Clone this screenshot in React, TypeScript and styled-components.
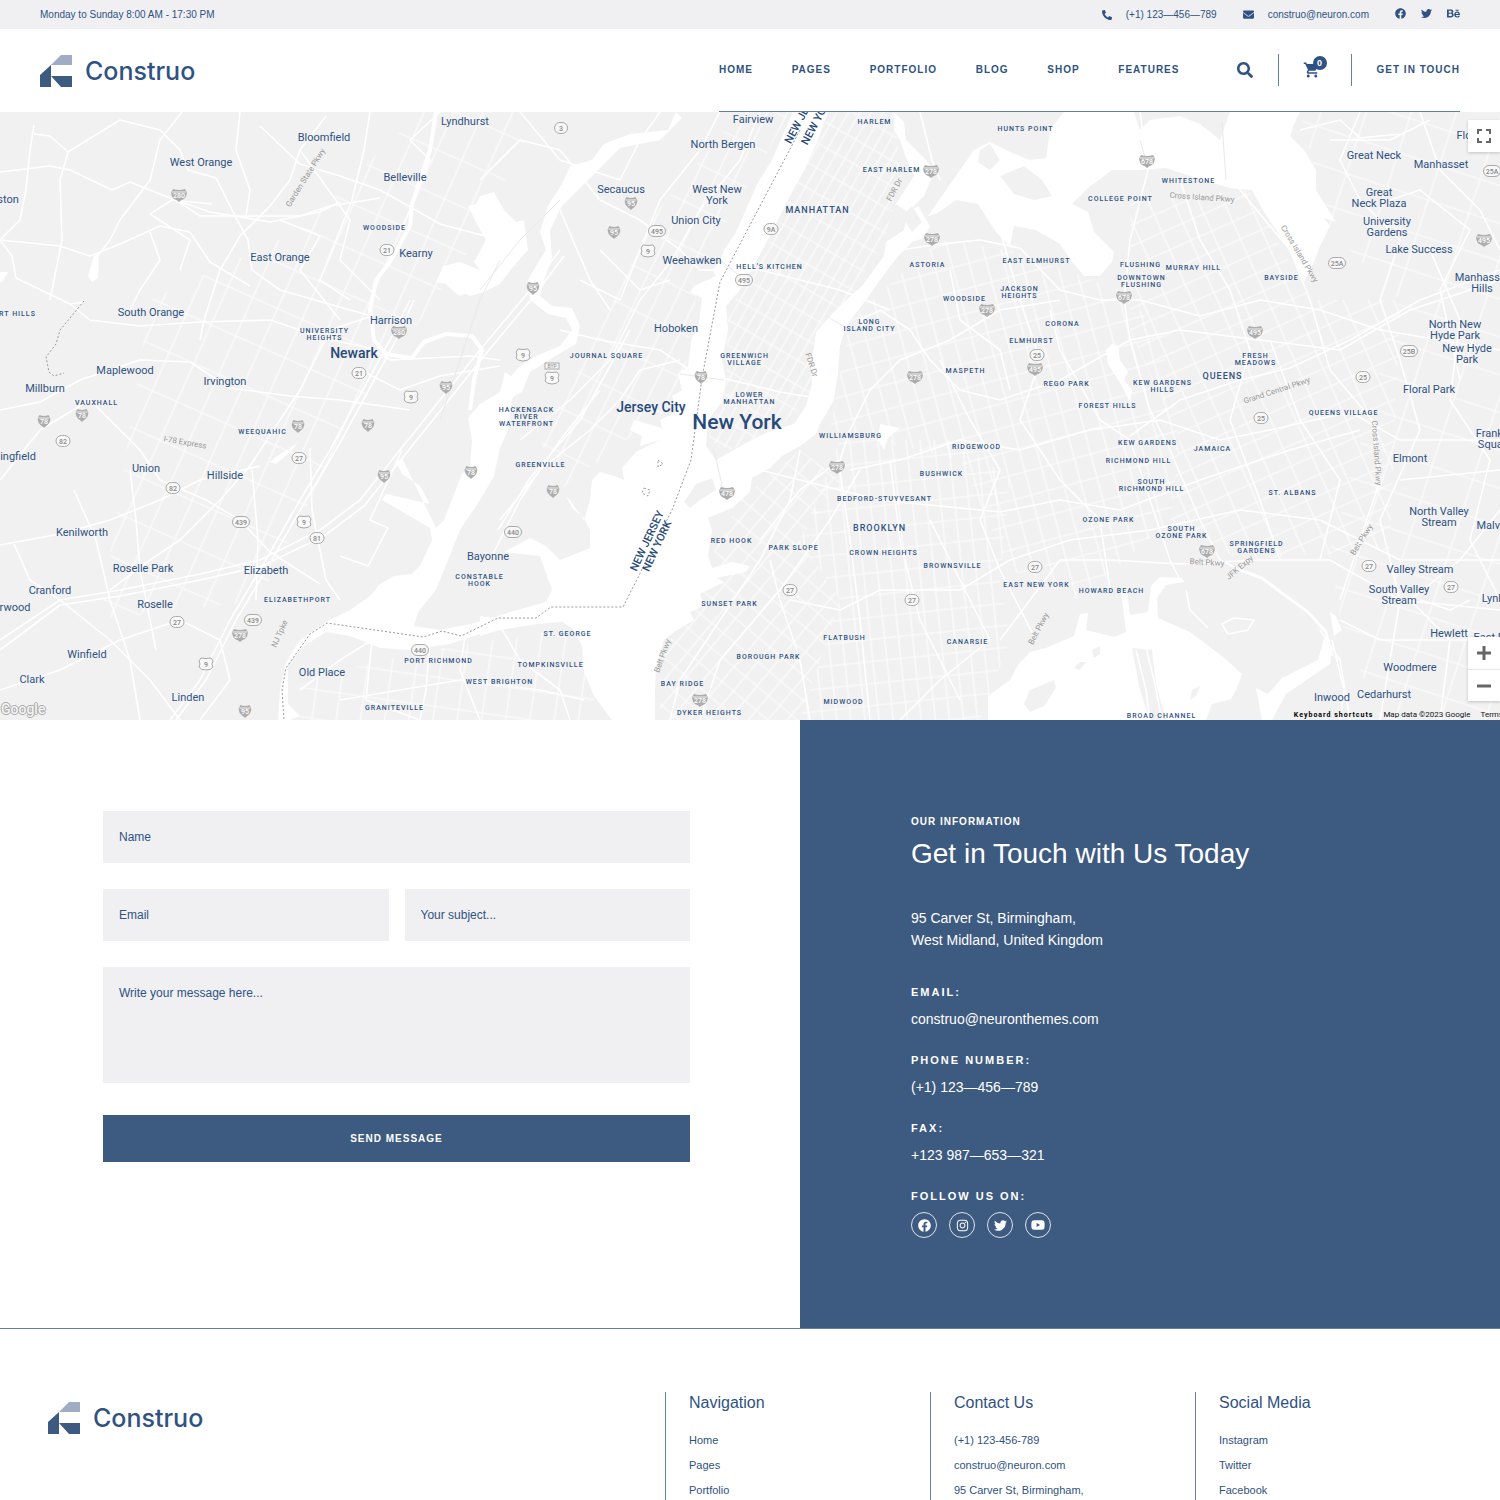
import React from "react";
import styled, { createGlobalStyle, css } from "styled-components";
import {
  FaPhoneAlt,
  FaEnvelope,
  FaFacebook,
  FaTwitter,
  FaBehance,
  FaSearch,
  FaInstagram,
  FaYoutube,
} from "react-icons/fa";
import { MdShoppingCart } from "react-icons/md";

const navy = "#2f5282";
const blue = "#3d5a80";
const line = "#6480a6";
const haze = "#f0f0f2";
const sans = `"Liberation Sans", Arial, sans-serif`;
const mapFont = `Roboto, "Liberation Sans", sans-serif`;

const GlobalStyle = createGlobalStyle`
  *, *::before, *::after { box-sizing: border-box; }
  body { margin: 0; background: #fff; color: ${navy}; font-family: ${sans}; }
  a { color: inherit; text-decoration: none; }
  h2, h3, p, ul, dl, dd, address { margin: 0; padding: 0; }
  ul { list-style: none; }
  button, input, textarea { font-family: inherit; border: 0; border-radius: 0; }
  svg { display: block; }
`;

/* ---------- top bar and header ---------- */

const TopBar = styled.div`
  display: flex;
  align-items: center;
  justify-content: space-between;
  height: 29px;
  padding: 0 40px;
  background: ${haze};
  font-size: 10px;
  line-height: 12px;
`;

const TopContacts = styled.div`
  display: flex;
  align-items: center;
  gap: 26px;
`;

const TopLink = styled.a`
  display: flex;
  align-items: center;
  gap: 14px;
`;

const TopSocial = styled.nav`
  display: flex;
  align-items: center;
  gap: 15px;
  padding-bottom: 3px;
`;

const HeaderBar = styled.header`
  display: flex;
  justify-content: space-between;
  height: 83px;
  padding: 0 40px;
`;

const Brand = styled.a`
  display: inline-flex;
  align-items: center;
  gap: 13px;
  font-family: Inter, ${sans};
  font-size: 25px;
  font-weight: 500;
  line-height: 32px;
`;

const HeaderMain = styled.div`
  display: flex;
  align-items: center;
  width: 50%;
  min-width: 741px;
  border-bottom: 1px solid ${line};
  font-size: 10px;
  font-weight: 700;
  line-height: 12px;
  letter-spacing: 1px;
`;

const MainNav = styled.nav`
  display: flex;
  flex: 1;
  justify-content: space-between;
`;

const IconButton = styled.button`
  display: flex;
  padding: 0;
  background: none;
  color: ${navy};
  cursor: pointer;
`;

const SearchButton = styled(IconButton)`
  margin: 0 25px 0 57px;
`;

const CartButton = styled(IconButton)`
  position: relative;
  margin: 0 28px 0 24px;
  padding-right: 2px;
`;

const CartCount = styled.span`
  position: absolute;
  top: -5px;
  right: -4px;
  width: 14px;
  height: 14px;
  border-radius: 50%;
  background: ${navy};
  color: #fff;
  font-size: 9px;
  font-weight: 700;
  line-height: 14px;
  letter-spacing: 0;
  text-align: center;
`;

const Divider = styled.span`
  width: 1px;
  height: 32px;
  background: ${line};
`;

const TouchLink = styled.a`
  margin-left: 25px;
`;

/* ---------- map ---------- */

const MapFrame = styled.section`
  position: relative;
  height: 608px;
  overflow: hidden;
  background: #f1f1f1;
  font-family: ${mapFont};
`;

const MapDrawing = styled.svg`
  width: 1500px;
  height: 608px;
`;

type Kind = "town" | "area" | "borough" | "city" | "metro" | "state" | "road";

const kinds = {
  town: css`font-size: 11px; line-height: 11px;`,
  area: css`padding: 1px 0 0 1px; font-size: 7px; line-height: 7px; font-weight: 500; letter-spacing: 1px;`,
  borough: css`padding: 1px 0 0 1px; font-size: 9px; line-height: 10px; font-weight: 500; letter-spacing: 1px;`,
  city: css`font-size: 14px; line-height: 16px; font-weight: 500; color: #274a7c;`,
  metro: css`font-size: 21px; line-height: 24px; font-weight: 500; color: #274a7c;`,
  state: css`font-size: 11px; line-height: 13px; font-weight: 500; color: #274a7c;`,
  road: css`font-size: 8px; line-height: 8px; color: #999;`,
};

const MapLabel = styled.span.attrs<{ $x: number; $y: number; $turn?: number }>((p) => ({
  style: {
    left: p.$x,
    top: p.$y,
    transform: `translate(-50%, -50%) rotate(${p.$turn || 0}deg)`,
  },
}))<{ $x: number; $y: number; $turn?: number; $kind: Kind }>`
  position: absolute;
  text-align: center;
  white-space: pre;
  ${(p) => kinds[p.$kind]}
`;

const MapControl = styled.button`
  display: flex;
  align-items: center;
  justify-content: center;
  width: 32px;
  height: 32px;
  padding: 0;
  background: #fff;
  cursor: pointer;
`;

const FullscreenCorner = styled.div`
  position: absolute;
  top: 8px;
  right: 0;
  box-shadow: 0 1px 3px rgba(0, 0, 0, 0.2);
`;

const ZoomCorner = styled.div`
  position: absolute;
  right: 0;
  bottom: 19px;
  background: #fff;
  box-shadow: 0 1px 3px rgba(0, 0, 0, 0.2);
  & > button + button { border-top: 1px solid #e6e6e6; }
`;

const Credits = styled.div`
  position: absolute;
  right: -3px;
  bottom: 0;
  display: flex;
  gap: 10px;
  color: #111;
  font-size: 8px;
  line-height: 10px;
  white-space: nowrap;
`;

const Shortcuts = styled.button`
  padding: 0;
  background: none;
  color: #000;
  font-size: 7px;
  font-weight: 700;
  line-height: 10px;
  letter-spacing: 1px;
`;

const GoogleMark = styled.a`
  position: absolute;
  left: 1px;
  bottom: 2px;
  color: #f4f4f4;
  font-size: 14px;
  font-weight: 500;
  line-height: 18px;
  text-shadow: 1px 0 #aaa, -1px 0 #aaa, 0 1px #aaa, 0 -1px #aaa;
`;

const labels: [Kind, string, number, number, number?][] = [
  ["town", "Lyndhurst", 465, 121], ["town", "Bloomfield", 324, 137], ["town", "West Orange", 201, 162],
  ["town", "Belleville", 405, 177], ["town", "ston", 8, 199], ["town", "East Orange", 280, 257],
  ["town", "Kearny", 416, 253], ["town", "South Orange", 151, 312], ["town", "Harrison", 391, 320],
  ["town", "Maplewood", 125, 370], ["town", "Irvington", 225, 381], ["town", "Millburn", 45, 388],
  ["town", "ingfield", 18, 456], ["town", "Union", 146, 468], ["town", "Hillside", 225, 475],
  ["town", "Kenilworth", 82, 532], ["town", "Roselle Park", 143, 568], ["town", "Elizabeth", 266, 570],
  ["town", "Cranford", 50, 590], ["town", "rwood", 15, 607], ["town", "Roselle", 155, 604],
  ["town", "Winfield", 87, 654], ["town", "Clark", 32, 679], ["town", "Linden", 188, 697],
  ["town", "Old Place", 322, 672], ["town", "Bayonne", 488, 556], ["town", "Fairview", 753, 119],
  ["town", "North Bergen", 723, 144], ["town", "Secaucus", 621, 189], ["town", "West New\nYork", 717, 195],
  ["town", "Union City", 696, 220], ["town", "Weehawken", 692, 260], ["town", "Hoboken", 676, 328],
  ["town", "Flo", 1464, 135], ["town", "Great Neck", 1374, 155], ["town", "Manhasset", 1441, 164],
  ["town", "Great\nNeck Plaza", 1379, 198], ["town", "University\nGardens", 1387, 227],
  ["town", "Lake Success", 1419, 249], ["town", "Manhasset\nHills", 1482, 283],
  ["town", "North New\nHyde Park", 1455, 330], ["town", "New Hyde\nPark", 1467, 354],
  ["town", "Floral Park", 1429, 389], ["town", "Elmont", 1410, 458], ["town", "Franklin\nSquare", 1495, 439],
  ["town", "North Valley\nStream", 1439, 517], ["town", "Malverne", 1499, 525],
  ["town", "Valley Stream", 1420, 569], ["town", "South Valley\nStream", 1399, 595],
  ["town", "Lynbrook", 1504, 598], ["town", "Hewlett", 1449, 633], ["town", "East Roc", 1495, 637],
  ["town", "Woodmere", 1410, 667], ["town", "Cedarhurst", 1384, 694], ["town", "Inwood", 1332, 697],
  ["area", "WOODSIDE", 384, 228], ["area", "RT HILLS", 17, 314], ["area", "UNIVERSITY\nHEIGHTS", 324, 334],
  ["area", "VAUXHALL", 96, 403], ["area", "WEEQUAHIC", 262, 432], ["area", "ELIZABETHPORT", 297, 600],
  ["area", "GRANITEVILLE", 394, 708], ["area", "PORT RICHMOND", 438, 661], ["area", "WEST BRIGHTON", 499, 682],
  ["area", "TOMPKINSVILLE", 550, 665], ["area", "ST. GEORGE", 567, 634], ["area", "CONSTABLE\nHOOK", 479, 580],
  ["area", "GREENVILLE", 540, 465], ["area", "HACKENSACK\nRIVER\nWATERFRONT", 526, 417],
  ["area", "JOURNAL SQUARE", 606, 356], ["area", "HARLEM", 874, 122], ["area", "EAST HARLEM", 891, 170],
  ["area", "HELL'S KITCHEN", 769, 267], ["area", "GREENWICH\nVILLAGE", 744, 359],
  ["area", "LOWER\nMANHATTAN", 749, 398], ["area", "ASTORIA", 927, 265], ["area", "WOODSIDE", 964, 299],
  ["area", "LONG\nISLAND CITY", 869, 325], ["area", "MASPETH", 965, 371], ["area", "WILLIAMSBURG", 850, 436],
  ["area", "RIDGEWOOD", 976, 447], ["area", "BUSHWICK", 941, 474], ["area", "BEDFORD-STUYVESANT", 884, 499],
  ["area", "CROWN HEIGHTS", 883, 553], ["area", "PARK SLOPE", 793, 548], ["area", "RED HOOK", 731, 541],
  ["area", "BROWNSVILLE", 952, 566], ["area", "SUNSET PARK", 729, 604], ["area", "FLATBUSH", 844, 638],
  ["area", "CANARSIE", 967, 642], ["area", "BOROUGH PARK", 768, 657], ["area", "BAY RIDGE", 682, 684],
  ["area", "DYKER HEIGHTS", 709, 713], ["area", "MIDWOOD", 843, 702], ["area", "HUNTS POINT", 1025, 129],
  ["area", "WHITESTONE", 1188, 181], ["area", "COLLEGE POINT", 1120, 199], ["area", "EAST ELMHURST", 1036, 261],
  ["area", "JACKSON\nHEIGHTS", 1019, 292], ["area", "FLUSHING", 1140, 265], ["area", "DOWNTOWN\nFLUSHING", 1141, 281],
  ["area", "MURRAY HILL", 1193, 268], ["area", "BAYSIDE", 1281, 278], ["area", "CORONA", 1062, 324],
  ["area", "ELMHURST", 1031, 341], ["area", "REGO PARK", 1066, 384], ["area", "KEW GARDENS\nHILLS", 1162, 386],
  ["area", "FRESH\nMEADOWS", 1255, 359], ["area", "FOREST HILLS", 1107, 406], ["area", "QUEENS VILLAGE", 1343, 413],
  ["area", "KEW GARDENS", 1147, 443], ["area", "RICHMOND HILL", 1138, 461], ["area", "JAMAICA", 1212, 449],
  ["area", "SOUTH\nRICHMOND HILL", 1151, 485], ["area", "ST. ALBANS", 1292, 493], ["area", "OZONE PARK", 1108, 520],
  ["area", "SOUTH\nOZONE PARK", 1181, 532], ["area", "SPRINGFIELD\nGARDENS", 1256, 547],
  ["area", "EAST NEW YORK", 1036, 585], ["area", "HOWARD BEACH", 1111, 591], ["area", "BROAD CHANNEL", 1161, 716],
  ["borough", "MANHATTAN", 817, 209], ["borough", "BROOKLYN", 879, 527], ["borough", "QUEENS", 1222, 375],
  ["city", "Newark", 354, 353], ["city", "Jersey City", 651, 407], ["metro", "New York", 737, 422],
  ["state", "NEW JERSEY", 647, 541, -65], ["state", "NEW YORK", 657, 546, -65],
  ["state", "NEW JERSEY", 803, 114, -62], ["state", "NEW YORK", 817, 120, -62],
  ["road", "Garden State Pkwy", 306, 178, -58], ["road", "I-78 Express", 185, 443, 10],
  ["road", "NJ Tpke", 280, 634, -66], ["road", "FDR Dr", 895, 190, -62], ["road", "FDR Dr", 811, 365, 72],
  ["road", "Belt Pkwy", 663, 656, -70], ["road", "Belt Pkwy", 1039, 629, -62], ["road", "Belt Pkwy", 1207, 563, 3],
  ["road", "Belt Pkwy", 1362, 540, -58], ["road", "JFK Expy", 1240, 568, -40],
  ["road", "Cross Island Pkwy", 1202, 198, 4], ["road", "Cross Island Pkwy", 1299, 254, 59],
  ["road", "Cross Island Pkwy", 1376, 453, 86], ["road", "Grand Central Pkwy", 1277, 391, -18],
];

type Shield = "i" | "r" | "u";
const shields: [Shield, string, number, number][] = [
  ["i", "280", 179, 195], ["i", "280", 399, 332], ["i", "95", 446, 387], ["i", "78", 44, 421], ["i", "78", 82, 415],
  ["i", "78", 298, 426], ["i", "78", 368, 425], ["i", "95", 384, 476], ["i", "78", 471, 472], ["i", "278", 240, 635],
  ["i", "95", 245, 711], ["i", "95", 631, 203], ["i", "95", 614, 232], ["i", "95", 533, 288], ["i", "78", 701, 377],
  ["i", "78", 553, 491], ["i", "478", 727, 493], ["i", "278", 931, 171], ["i", "278", 932, 239], ["i", "278", 915, 377],
  ["i", "278", 837, 467], ["i", "278", 700, 700], ["i", "278", 987, 310], ["i", "495", 1035, 369], ["i", "678", 1124, 297],
  ["i", "678", 1147, 161], ["i", "495", 1255, 332], ["i", "678", 1207, 551], ["i", "495", 1484, 240],
  ["r", "3", 561, 128], ["r", "21", 387, 250], ["r", "21", 359, 373], ["r", "82", 63, 441], ["r", "82", 173, 488],
  ["r", "27", 299, 458], ["r", "439", 241, 522], ["r", "81", 317, 538], ["r", "27", 177, 622], ["r", "439", 253, 620],
  ["r", "440", 420, 650], ["r", "440", 513, 532], ["r", "495", 657, 231], ["r", "9A", 771, 229], ["r", "495", 744, 280],
  ["r", "27", 790, 590], ["r", "27", 912, 600], ["r", "25", 1037, 355], ["r", "25A", 1337, 263], ["r", "25A", 1492, 171],
  ["r", "25B", 1409, 351], ["r", "25", 1363, 377], ["r", "25", 1261, 418], ["r", "27", 1035, 567], ["r", "27", 1369, 566],
  ["r", "27", 1451, 587],
  ["u", "9", 411, 397], ["u", "9", 304, 522], ["u", "9", 206, 664], ["u", "9", 648, 251], ["u", "9", 523, 355], ["u", "9", 552, 378],
];

function RouteShield({ kind, text, x, y }: { kind: Shield; text: string; x: number; y: number }) {
  const w = text.length > 2 ? 16 : text.length > 1 ? 13 : kind === "u" ? 14 : 12;
  const h = w / 2;
  return (
    <g transform={`translate(${x} ${y})`}>
      {kind === "i" && (
        <>
          <path
            d={`M${-h + 2} -6 Q0 -4 ${h - 2} -6 Q${h + 2} -1 ${h - 3} 4 Q2 5 0 7 Q-2 5 ${-h + 3} 4 Q${-h - 2} -1 ${-h + 2} -6Z`}
            fill="#adadad"
          />
          <path d={`M${-h + 1} -3H${h - 1}`} stroke="#f1f1f1" strokeWidth="1" />
        </>
      )}
      {kind === "r" && <rect x={-h - 0.5} y="-5.5" width={w + 1} height="11" rx="5.5" fill="#f8f8f8" stroke="#aaa" />}
      {kind === "u" && (
        <path d="M-5 -6Q0 -5 5 -6L7 -3Q5 0 7 3Q5 6 0 6Q-5 6 -7 3Q-5 0 -7 -3Z" fill="#f8f8f8" stroke="#aaa" />
      )}
      <text y="3" textAnchor="middle" fontSize="7" fontWeight="500" fill={kind === "i" ? "#fff" : "#888"}>
        {text}
      </text>
    </g>
  );
}

const water = [
  // Hudson river and Upper Bay
  "M793 112L784 132L772 160L757 184L745 212L735 234L724 250L720 262L712 270L716 276L694 286L690 292L702 298L698 330L692 336L688 366L678 374L682 390L672 396L676 412L660 420L662 428L634 420L630 430L642 436L640 446L660 440L636 452L622 468L624 480L614 476L600 472L592 480L590 500L584 520L570 500L566 496L572 508L584 518L590 530L590 548L560 560L546 546L530 538L504 552L540 556L552 590L546 602L510 612L492 618L480 616L480 636L500 630L560 620L574 630L582 646L584 672L594 696L612 720L655 720L655 694L656 666L664 640L674 632L694 620L690 612L704 606L700 594L724 582L716 578L746 572L750 566L732 562L712 568L708 556L712 530L708 518L732 508L750 492L752 478L770 468L782 456L800 446L816 434L820 424L834 400L838 372L840 346L846 326L866 300L880 280L898 256L912 242L924 238L930 226L918 206L908 212L904 230L886 242L884 256L862 286L846 300L830 316L816 332L813 356L812 384L806 406L794 424L768 432L748 442L730 452L716 460L706 446L708 420L722 402L726 380L722 360L728 330L726 306L740 290L756 262L772 232L790 196L804 170L818 140L828 112Z",
  // Newark Bay and the Kills
  "M505 372L500 392L480 404L468 418L472 440L470 468L462 474L444 520L436 528L402 458L396 462L402 474L420 486L430 504L386 494L382 500L430 528L432 540L420 566L412 574L394 576L380 584L370 596L350 610L326 622L300 640L286 662L280 690L278 720L290 720L300 716L288 704L288 664L304 646L326 632L350 636L380 648L410 650L450 644L480 634L516 626L560 622L600 616L622 610L610 600L560 606L520 612L470 624L440 630L414 626L418 612L436 590L448 560L460 530L480 500L494 476L500 448L508 430L512 400L520 382Z",
  // Meadowlands and Hackensack river
  "M676 112L668 130L630 134L604 144L592 160L570 166L562 184L548 206L540 232L546 250L536 266L528 280L530 300L548 314L566 318L572 330L560 346L536 356L520 366L508 380L500 404L522 392L530 372L552 358L576 344L580 326L572 308L552 306L540 296L544 280L552 258L550 230L562 206L580 188L590 178L604 164L620 148L660 140L682 118Z",
  "M480 196L494 192L504 210L516 222L524 220L528 250L512 268L500 284L484 292L470 296L462 292L480 270L474 262L486 240L478 226L468 206L476 204Z",
  "M444 266L460 262L480 270L484 284L460 296L452 290L446 284L436 282Z",
  // East river, Flushing bay and Long Island sound
  "M928 216L946 190L960 170L974 150L990 142L1010 152L1030 160L1046 158L1050 130L1064 112L1134 112L1140 130L1150 120L1180 116L1200 124L1220 140L1230 112L1300 112L1294 124L1290 136L1304 150L1316 170L1316 190L1326 206L1336 222L1324 218L1330 226L1320 246L1314 262L1304 282L1296 262L1280 236L1264 212L1252 190L1230 188L1196 178L1166 168L1138 170L1112 170L1088 188L1072 204L1088 212L1094 232L1114 252L1112 262L1100 276L1084 276L1072 262L1060 244L1036 230L1014 226L1010 246L996 232L978 204L956 200L936 214Z",
  "M894 112L904 122L906 140L926 160L934 172L924 196L908 212L896 204L914 176L906 158L900 140L894 130Z",
  // Jamaica bay
  "M988 720L988 696L1010 680L1018 665L1030 652L1046 648L1074 636L1080 614L1088 613L1086 630L1114 637L1126 632L1121 590L1127 590L1130 615L1148 612L1151 586L1160 577L1182 578L1184 582L1166 585L1157 598L1158 618L1190 632L1222 656L1242 674L1236 690L1226 708L1224 720Z",
  "M1256 688L1268 694L1282 678L1318 660L1324 638L1332 650L1330 664L1286 694L1272 720L1262 720Z",
  "M1112 344L1118 346L1120 360L1128 372L1124 380L1132 390L1130 402L1122 386L1108 364L1106 350Z",
  "M94 256L99 252L98 278L92 282L88 276Z",
  "M270 462L280 454L296 444L300 440L290 452L276 464Z",
  "M0 272L8 272L2 282L0 282Z",
  "M1330 612L1336 616L1342 630L1334 636Z",
  "M880 424L900 428L888 438L884 450L878 440Z",
];

const islands = [
  "M980 150L990 144L1000 160L990 170L978 162Z",
  "M1000 176L1024 166L1042 180L1052 196L1034 200L1014 194Z",
  "M696 484L712 478L716 490L700 500L690 508L684 502Z",
  "M1024 704L1030 690L1054 680L1056 688L1044 706L1030 712Z",
  "M1132 648L1152 650L1156 684L1166 720L1150 720L1140 690Z",
  "M1074 668L1080 662L1086 662L1080 670Z",
  "M1092 650L1100 646L1100 654L1094 658Z",
  "M902 216L912 206L922 222L912 232Z",
  "M1192 690L1200 686L1196 696L1190 700Z",
  "M1212 704L1236 698L1240 720L1206 720Z",
];

const highways = [
  "M0 172L50 166L70 170L112 190L130 182L170 198L210 212L270 222L320 212L340 202",
  "M34 125L30 150L26 190L20 220L0 240L12 256L16 278L70 304L85 302",
  "M68 152L60 180L62 240L50 300M0 240L60 246L90 256L120 244L160 226L190 232L210 262L250 286",
  "M182 112L160 140L150 180L120 220L110 240L96 258",
  "M68 152L120 120L160 130L180 150L188 170L216 178L232 210L248 240L252 270L280 290L350 310L372 316",
  "M240 112L236 150L250 190L246 216L300 216L330 206L380 198",
  "M326 116L300 150L290 180L270 206L240 236L220 270L204 320L200 340",
  "M260 126L300 164L340 176L380 190L412 208L440 224L500 240",
  "M370 112L364 150L352 200L336 240L320 280L350 300",
  "M440 112L410 140L430 160L410 210L400 232",
  "M180 270L190 240L150 214L172 200L212 204",
  "M34 134L50 136L68 152M150 232L160 260L140 290L130 310M250 216L200 216L176 200",
  "M300 150L350 220L340 260L380 300M280 220L320 236L300 270L340 320",
  "M70 304L90 320L140 326L200 322L270 320L330 340L370 348L390 360L470 356L500 360",
  "M372 316L330 330L300 390L280 420L250 466L220 500L180 540L150 560L110 590",
  "M0 410L40 402L80 380L140 360L190 362L230 388L290 396L340 400L410 410",
  "M0 480L40 430L90 400L140 450L160 480L206 500L240 520L270 552L320 584",
  "M0 545L60 534L110 520L160 500L200 480L260 466",
  "M0 640L60 600L120 590L200 574L260 560L320 530L360 500L400 450L440 400L480 350L530 290L560 250",
  "M0 650L60 605L120 596L200 580L262 566L324 536L364 506L404 456L444 406L484 356L534 296L564 256",
  "M14 544L30 580L60 600L110 640L150 680L180 720",
  "M74 490L96 540L110 600L130 660L140 720M130 470L136 520L140 570L150 620L156 650",
  "M0 690L60 670L120 640L180 620L220 640L230 680L200 720",
  "M170 720L200 680L230 620L260 570L300 500L330 450L390 340L410 300",
  "M176 720L206 680L236 620L266 570L306 500L336 450L396 340L414 300",
  "M252 470L258 540L256 600M310 448L312 510L326 580L340 600",
  "M360 370L400 390L440 376L500 366M402 450L370 520L388 528L368 566L340 556",
  "M300 690L340 660L372 640L366 700L420 720M430 640L426 690L420 720M466 630L460 670L480 720M500 626L520 660L560 690L570 720",
  "M340 700L400 690L460 680L540 690L584 700",
  "M480 180L520 140L560 150L600 200L640 220L680 250L700 270L760 270L840 290L890 310",
  "M520 112L560 160L620 180L640 140L660 112M580 280L620 300L640 250L660 200L700 150L720 112",
  "M560 210L590 280L610 310M600 250L640 290L670 280M560 330L600 340L660 350L690 370L780 392L830 400",
  "M520 440L570 400L610 360L640 300L672 260L700 210L740 160L760 112",
  "M500 520L540 470L590 430L620 400L640 370L680 360M490 560L520 500L560 440L600 390M498 530L530 478L580 420L630 330",
  "M860 320L880 310L910 330L930 360L960 390L1000 400L1060 380L1130 340L1180 330L1260 340L1340 350L1410 310L1500 280",
  "M900 250L940 244L980 240L1020 248L1060 290L1100 300L1140 300L1200 316L1260 300L1320 310L1380 330L1500 350",
  "M920 112L932 160L940 180M1050 310L1060 350L1100 420L1130 440L1150 500L1170 560L1180 580",
  "M1140 112L1148 170L1130 240L1124 300L1130 340L1150 410L1170 450L1200 520L1220 560L1240 570",
  "M1222 170L1240 190L1290 250L1310 300L1330 370L1372 420L1380 480L1360 540L1340 600",
  "M1130 436L1180 400L1240 380L1290 368L1350 340L1420 300L1500 270",
  "M850 470L900 460L960 440L1020 450L1090 430L1160 420L1220 440L1270 430L1350 412L1400 440L1500 440",
  "M760 540L800 490L840 460L850 430L870 390L900 360L950 340L1000 310L1060 300",
  "M670 720L680 680L720 620L760 560L790 500L800 450M700 720L720 660L780 590L830 520L860 470",
  "M760 470L800 480L880 500L1000 512L1060 500L1120 510L1200 480L1290 450L1360 430",
  "M790 600L840 610L880 590L960 590L1010 560L1070 540L1150 530L1240 510L1320 520L1400 560L1500 560",
  "M1000 640L1030 600L1060 560L1110 560L1180 564L1260 560L1330 560L1400 600L1500 610",
  "M810 720L800 660L780 600L770 560M870 720L860 620L850 540L840 470M960 700L920 620L900 540L890 460",
  "M900 720L940 680L990 640L960 580L930 520M1036 640L1000 570L980 520L1000 470L970 420L940 360",
  "M1360 112L1340 160L1360 200L1400 240L1380 300L1400 360L1420 430L1380 520L1400 600L1380 720",
  "M1300 130L1340 120L1360 138L1400 134M1390 200L1420 190L1470 230L1440 290L1460 380M1400 480L1500 470",
  "M1420 112L1440 170L1480 210L1500 250M1330 140L1390 140L1430 120M1430 250L1460 320L1450 400L1490 460L1470 540L1500 600",
  "M1440 720L1450 640L1410 600L1460 560L1500 510M1340 620L1380 640L1420 640L1500 640M1350 720L1340 660L1320 630",
  "M1180 180L1200 240L1230 290L1250 350L1230 420L1260 500L1280 560M1270 340L1300 420L1340 480L1320 560",
  "M1000 230L1020 300L1040 360L1020 420L1060 480L1100 520L1110 590M950 270L960 320L1000 350L1010 390",
  "M1186 590L1190 610L1208 628M1332 640L1344 690L1340 720M1420 600L1450 610L1470 600",
];

const streets: { id: string; size: [number, number]; turn: number; area: string }[] = [
  { id: "manhattan", size: [10, 22], turn: 30, area: "M830 112L894 112L900 160L896 200L884 240L850 296L816 330L810 400L780 426L730 450L708 440L726 380L728 310L760 262Z" },
  { id: "brooklyn", size: [15, 19], turn: 40, area: "M740 500L800 450L840 480L800 540L840 600L800 720L660 720L660 660Z" },
  { id: "flatbush", size: [14, 22], turn: -6, area: "M840 440L960 440L1010 480L1000 580L1010 640L980 720L800 720L840 600L800 540Z" },
  { id: "queens", size: [17, 24], turn: -15, area: "M850 320L940 240L1010 250L1120 290L1160 330L1180 440L1170 520L1080 600L1010 570L960 460L830 430Z" },
  { id: "jamaica", size: [23, 19], turn: -24, area: "M1130 200L1250 190L1310 300L1400 300L1390 550L1240 560L1170 520L1180 440L1130 330Z" },
  { id: "nassau", size: [43, 36], turn: 18, area: "M1300 112H1500V720H1380L1340 620L1330 550L1400 300L1330 230Z" },
  { id: "jersey", size: [18, 40], turn: 26, area: "M540 440L600 330L650 220L740 112L790 112L700 270L680 400L560 490Z" },
  { id: "newark", size: [27, 42], turn: 24, area: "M150 300L300 230L420 112H540L470 250L350 420L260 600L100 620Z" },
  { id: "staten", size: [24, 29], turn: 8, area: "M300 680L420 652L560 630L584 660L600 720H300Z" },
];

function CityMap() {
  return (
    <MapDrawing viewBox="0 112 1500 608" fontFamily="Roboto, sans-serif" aria-hidden="true">
      <defs>
        {streets.map((s) => (
          <pattern
            key={s.id}
            id={s.id}
            width={s.size[0]}
            height={s.size[1]}
            patternUnits="userSpaceOnUse"
            patternTransform={`rotate(${s.turn})`}
          >
            <path d={`M1 0V${s.size[1]}M0 1H${s.size[0]}`} stroke="#fff" strokeWidth="1.2" />
          </pattern>
        ))}
      </defs>
      <rect y="112" width="1500" height="608" fill="#f1f1f1" />
      {streets.map((s) => (
        <path key={s.id} d={s.area} fill={`url(#${s.id})`} opacity="0.8" />
      ))}
      <g fill="#fff">{water.map((d) => <path key={d} d={d} />)}</g>
      <g fill="#f1f1f1">{islands.map((d) => <path key={d} d={d} />)}</g>
      <g fill="none" stroke="#fff" strokeWidth="1.6" strokeLinejoin="round">
        {highways.map((d) => <path key={d} d={d} />)}
        <path d="M1136 650L1146 690L1150 720M1146 648L1154 680L1162 720" />
        <path d="M1222 624L1234 618L1254 620L1248 630L1228 634Z" />
      </g>
      <path d="M1240 570L1262 578L1286 596L1308 612L1326 632L1332 656" fill="none" stroke="#fff" strokeWidth="3" />
      <path
        d="M436 112L430 150L412 204L410 226L390 262L376 280L370 310L374 340L386 354L412 358L424 342L446 334L472 336L482 350L474 380L470 410"
        fill="none" stroke="#fff" strokeWidth="4" strokeLinejoin="round"
      />
      <g fill="none" stroke="#e9e9e9">
        <path d="M480 290L520 240L560 200M440 420L480 300L500 260M720 260L740 276M714 450L724 494M826 316L850 330M680 374L724 380M1140 140L1148 168M1222 122L1226 180" />
      </g>
      <g fill="none" stroke="#999" strokeDasharray="2 2">
        <path d="M800 130L720 282L702 378L691 460L672 510L623 607H551L536 618H498L461 636L442 631L423 637L327 623L310 634L286 668L282 690L284 720" />
        <path d="M84 301L70 318L60 330L56 344L46 357L49 372L54 376L64 373M658 460L663 464L658 467ZM644 488L650 490L648 496L642 493Z" />
      </g>
      {shields.map(([kind, text, x, y]) => (
        <RouteShield key={`${x}-${y}`} kind={kind} text={text} x={x} y={y} />
      ))}
      <rect x="545" y="363" width="14" height="6" fill="#f8f8f8" stroke="#aaa" />
      <text x="552" y="368" fontSize="5" fill="#888" textAnchor="middle">BYP</text>
    </MapDrawing>
  );
}

/* ---------- contact ---------- */

const Contact = styled.main`
  display: grid;
  grid-template-columns: 8fr 7fr;
`;

const Form = styled.form`
  display: flex;
  flex-direction: column;
  gap: 26px;
  padding: 91px 110px 90px 103px;
`;

const FieldRow = styled.div`
  display: grid;
  grid-template-columns: 1fr 1fr;
  gap: 16px;
`;

const field = css`
  display: block;
  width: 100%;
  padding: 0 16px;
  background: ${haze};
  color: ${navy};
  font-size: 12px;
  line-height: 20px;
  &::placeholder { color: ${navy}; opacity: 1; }
`;

const Field = styled.input`
  ${field}
  height: 52px;
`;

const Message = styled.textarea`
  ${field}
  height: 116px;
  padding-top: 16px;
  resize: none;
`;

const SendButton = styled.button`
  height: 47px;
  margin-top: 6px;
  background: ${blue};
  color: #fff;
  font-size: 10px;
  font-weight: 700;
  letter-spacing: 1px;
  text-transform: uppercase;
  cursor: pointer;
`;

const Info = styled.section`
  padding: 94px 40px 90px 111px;
  background: ${blue};
  color: #fff;
`;

const Eyebrow = styled.p`
  font-size: 10px;
  font-weight: 700;
  line-height: 16px;
  letter-spacing: 1px;
`;

const InfoTitle = styled.h2`
  margin-top: 7px;
  font-size: 28px;
  font-weight: 400;
  line-height: 34px;
`;

const Address = styled.address`
  margin: 36px 0 33px;
  font-size: 14px;
  font-style: normal;
  line-height: 22px;
`;

const Details = styled.dl`
  display: flex;
  flex-direction: column;
  gap: 22px;
`;

const DetailName = styled.dt`
  font-size: 11px;
  font-weight: 700;
  line-height: 16px;
  letter-spacing: 2px;
`;

const DetailValue = styled.dd`
  margin-top: 8px;
  font-size: 14px;
  line-height: 22px;
`;

const SocialRow = styled.dd`
  display: flex;
  gap: 12px;
  margin-top: 8px;
`;

const SocialCircle = styled.a`
  display: flex;
  align-items: center;
  justify-content: center;
  width: 26px;
  height: 26px;
  border: 1px solid #dfe5ec;
  border-radius: 50%;
`;

/* ---------- footer ---------- */

const FooterBar = styled.footer`
  display: grid;
  grid-template-columns: 1fr repeat(3, 265px);
  padding: 63px 40px 0;
  border-top: 1px solid ${line};
`;

const FooterBrand = styled.div`
  padding: 10px 8px;
`;

const FooterColumn = styled.section`
  padding-left: 23px;
  border-left: 1px solid ${line};
`;

const FooterTitle = styled.h3`
  font-size: 16px;
  font-weight: 400;
  line-height: 22px;
`;

const FooterLinks = styled.ul`
  display: flex;
  flex-direction: column;
  gap: 6px;
  margin-top: 17px;
  font-size: 11px;
  line-height: 19px;
`;

const footerColumns = [
  { title: "Navigation", links: ["Home", "Pages", "Portfolio"] },
  { title: "Contact Us", links: ["(+1) 123-456-789", "construo@neuron.com", "95 Carver St, Birmingham,"] },
  { title: "Social Media", links: ["Instagram", "Twitter", "Facebook"] },
];

function Logo() {
  return (
    <Brand href="#">
      <svg width="32" height="32" viewBox="0 0 32 32" aria-hidden="true">
        <path d="M21 0H32V10H11Z" fill="#9fadc4" />
        <path d="M0 20L11 10V32H0Z" fill={blue} />
        <path d="M11 21H32V32H21Z" fill={blue} />
      </svg>
      Construo
    </Brand>
  );
}

export default function App() {
  return (
    <>
      <GlobalStyle />
      <TopBar>
        <span>Monday to Sunday 8:00 AM - 17:30 PM</span>
        <TopContacts>
          <TopLink href="#"><FaPhoneAlt size={10} />(+1) 123—456—789</TopLink>
          <TopLink href="#"><FaEnvelope size={11} />construo@neuron.com</TopLink>
          <TopSocial aria-label="Social">
            <a href="#" aria-label="Facebook"><FaFacebook size={11} /></a>
            <a href="#" aria-label="Twitter"><FaTwitter size={11} /></a>
            <a href="#" aria-label="Behance"><FaBehance size={13} /></a>
          </TopSocial>
        </TopContacts>
      </TopBar>
      <HeaderBar>
        <Logo />
        <HeaderMain>
          <MainNav>
            {["HOME", "PAGES", "PORTFOLIO", "BLOG", "SHOP", "FEATURES"].map((item) => (
              <a key={item} href="#">{item}</a>
            ))}
          </MainNav>
          <SearchButton aria-label="Search"><FaSearch size={16} /></SearchButton>
          <Divider />
          <CartButton aria-label="Cart">
            <MdShoppingCart size={18} />
            <CartCount>0</CartCount>
          </CartButton>
          <Divider />
          <TouchLink href="#">GET IN TOUCH</TouchLink>
        </HeaderMain>
      </HeaderBar>

      <MapFrame aria-label="Map">
        <CityMap />
        {labels.map(([kind, text, x, y, turn]) => (
          <MapLabel key={`${text}-${x}`} $kind={kind} $x={x} $y={y - 112} $turn={turn}>{text}</MapLabel>
        ))}
        <FullscreenCorner>
          <MapControl aria-label="Toggle fullscreen view">
            <svg width="14" height="14" viewBox="0 0 14 14" fill="none" stroke="#666" strokeWidth="2">
              <path d="M1 5V1H5M9 1H13V5M13 9V13H9M5 13H1V9" />
            </svg>
          </MapControl>
        </FullscreenCorner>
        <ZoomCorner>
          <MapControl aria-label="Zoom in">
            <svg width="14" height="14" viewBox="0 0 14 14" stroke="#666" strokeWidth="3"><path d="M0 7H14M7 0V14" /></svg>
          </MapControl>
          <MapControl aria-label="Zoom out">
            <svg width="14" height="14" viewBox="0 0 14 14" stroke="#666" strokeWidth="3"><path d="M0 7H14" /></svg>
          </MapControl>
        </ZoomCorner>
        <GoogleMark href="#">Google</GoogleMark>
        <Credits>
          <Shortcuts>Keyboard shortcuts</Shortcuts>
          <span>Map data ©2023 Google</span>
          <a href="#">Terms</a>
        </Credits>
      </MapFrame>

      <Contact>
        <Form onSubmit={(e) => e.preventDefault()}>
          <Field type="text" aria-label="Name" placeholder="Name" />
          <FieldRow>
            <Field type="email" aria-label="Email" placeholder="Email" />
            <Field type="text" aria-label="Your subject" placeholder="Your subject..." />
          </FieldRow>
          <Message aria-label="Message" placeholder="Write your message here..." />
          <SendButton type="submit">Send message</SendButton>
        </Form>
        <Info>
          <Eyebrow>OUR INFORMATION</Eyebrow>
          <InfoTitle>Get in Touch with Us Today</InfoTitle>
          <Address>95 Carver St, Birmingham,<br />West Midland, United Kingdom</Address>
          <Details>
            <div><DetailName>EMAIL:</DetailName><DetailValue>construo@neuronthemes.com</DetailValue></div>
            <div><DetailName>PHONE NUMBER:</DetailName><DetailValue>(+1) 123—456—789</DetailValue></div>
            <div><DetailName>FAX:</DetailName><DetailValue>+123 987—653—321</DetailValue></div>
            <div>
              <DetailName>FOLLOW US ON:</DetailName>
              <SocialRow>
                <SocialCircle href="#" aria-label="Facebook"><FaFacebook size={13} /></SocialCircle>
                <SocialCircle href="#" aria-label="Instagram"><FaInstagram size={13} /></SocialCircle>
                <SocialCircle href="#" aria-label="Twitter"><FaTwitter size={13} /></SocialCircle>
                <SocialCircle href="#" aria-label="YouTube"><FaYoutube size={14} /></SocialCircle>
              </SocialRow>
            </div>
          </Details>
        </Info>
      </Contact>

      <FooterBar>
        <FooterBrand><Logo /></FooterBrand>
        {footerColumns.map((col) => (
          <FooterColumn key={col.title}>
            <FooterTitle>{col.title}</FooterTitle>
            <FooterLinks>
              {col.links.map((link) => <li key={link}><a href="#">{link}</a></li>)}
            </FooterLinks>
          </FooterColumn>
        ))}
      </FooterBar>
    </>
  );
}
